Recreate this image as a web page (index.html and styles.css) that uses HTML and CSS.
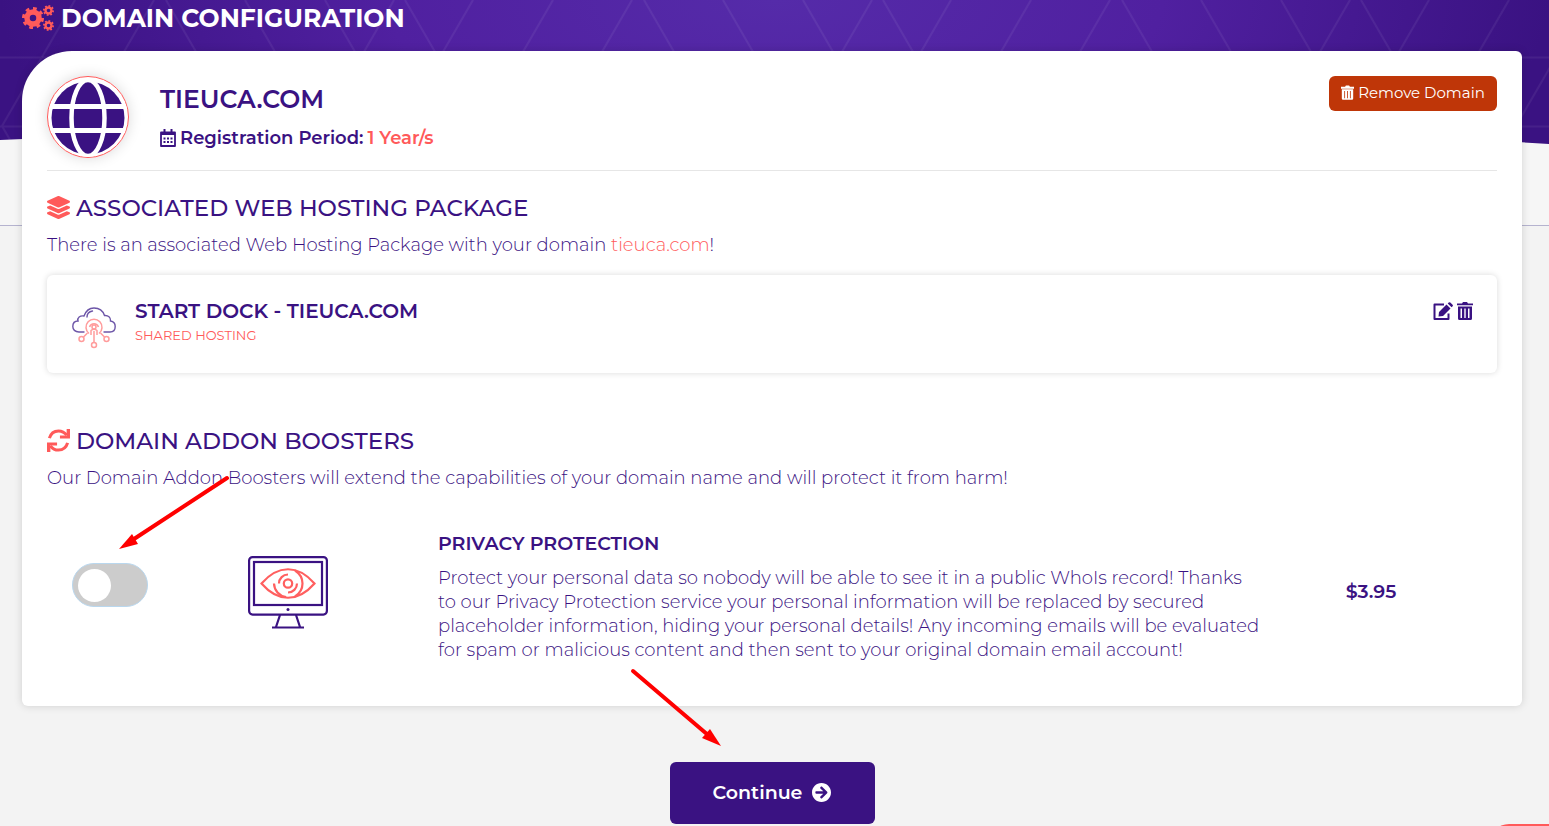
FILE: index.html
```
<!DOCTYPE html>
<html lang="en">
<head>
    <meta charset="UTF-8">
    <meta name="viewport" content="width=device-width, initial-scale=1.0">
    <title>Domain Configuration</title>
    <link rel="stylesheet" href="styles.css">
</head>

<body>
    <div class="hero-bg">
        <svg width="100%" height="100%" aria-hidden="true">
            <defs>
                <pattern id="triangles" width="478" height="195" patternUnits="userSpaceOnUse">
                    <path d="M-5 0l-33 57M75 0l-33 57M154 0l-33 57M394 0l-33 57M473 0l-33 57" />
                    <path d="M166 0l33 57M245 0l33 57M325 0l33 57M405 0l33 57" />
                    <path d="M0 57.500H478M0 126.500H478M42 57L2 126l40 69M122 57L82 126" />
                </pattern>
            </defs>
            <rect width="100%" height="100%" fill="url(#triangles)" />
        </svg>
    </div>
    <div class="top-band"></div>

    <main>
        <h1 class="page-title">
            <svg class="icon-cogs" viewBox="0 0 32 26" aria-hidden="true">
                <circle class="ring" cx="11" cy="13" r="6" stroke-width="5.500" />
                <circle class="ring" cx="11" cy="13" r="9" stroke-width="4" pathLength="16" stroke-dasharray="1" />
                <circle class="ring" cx="26.500" cy="5.500" r="3" stroke-width="2.400" />
                <circle class="ring" cx="26.500" cy="5.500" r="4.600" stroke-width="1.800" pathLength="16" stroke-dasharray="1" />
                <circle class="ring" cx="26.500" cy="20.500" r="3" stroke-width="2.400" />
                <circle class="ring" cx="26.500" cy="20.500" r="4.600" stroke-width="1.800" pathLength="16" stroke-dasharray="1" />
            </svg>
            DOMAIN CONFIGURATION
        </h1>

        <div class="card">
            <div class="domain-header">
                <div class="domain-icon">
                    <svg viewBox="0 0 80 80" aria-hidden="true">
                        <circle cx="40" cy="41" r="36.500" fill="#3a1282" />
                        <path d="M0 29.500H80M0 53.500H80" fill="none" stroke="#fff" stroke-width="5" />
                        <ellipse cx="40" cy="41" rx="16.500" ry="38" fill="none" stroke="#fff" stroke-width="4.500" />
                    </svg>
                </div>
                <div class="domain-info">
                    <h2>TIEUCA.COM</h2>
                    <p>
                        <svg class="icon-calendar" viewBox="0 0 16 18" aria-hidden="true">
                            <path d="M1 3.500H15V17H1Z" fill="none" stroke="currentColor" stroke-width="1.800" stroke-linejoin="round" />
                            <path d="M1 3H15V6H1ZM3.500 0H5.500V4H3.500ZM10.500 0H12.500V4H10.500Z" fill="currentColor" />
                            <path d="M3.500 9.500H12.500M3.500 13H12.500" stroke="currentColor" stroke-width="2" stroke-dasharray="2 1.500" />
                        </svg>
                        Registration Period: <span class="accent">1 Year/s</span>
                    </p>
                </div>
                <button type="button" class="btn-remove">
                    <svg class="icon-trash-small" viewBox="0 0 16 18" aria-hidden="true">
                        <path fill="currentColor" fill-rule="evenodd" d="M0 2H5L6 .5H10L11 2H16V4.500H0ZM1 5H15V16.500Q15 18 13.500 18H2.500Q1 18 1 16.500ZM4 7V16H5V7ZM7.500 7V16H8.500V7ZM11 7V16H12V7Z" />
                    </svg>
                    Remove Domain
                </button>
            </div>

            <section class="package">
                <h3>
                    <svg class="icon-heading" viewBox="0 0 512 512" aria-hidden="true">
                        <path d="M12.410 148.020l232.940 105.670c6.800 3.090 14.490 3.090 21.290 0l232.940-105.670c16.550-7.510 16.550-32.520 0-40.030L266.650 2.310a25.607 25.607 0 0 0-21.290 0L12.410 107.980c-16.550 7.510-16.550 32.530 0 40.040zm487.180 88.280l-58.090-26.330-161.640 73.270c-7.560 3.430-15.590 5.170-23.860 5.170s-16.290-1.740-23.860-5.170L70.510 209.970l-58.100 26.330c-16.550 7.500-16.550 32.500 0 40l232.940 105.590c6.800 3.080 14.490 3.080 21.290 0L499.590 276.300c16.550-7.500 16.550-32.500 0-40zm0 127.800l-57.870-26.230-161.860 73.370c-7.560 3.430-15.590 5.170-23.860 5.170s-16.290-1.740-23.860-5.170L70.290 337.870 12.410 364.100c-16.550 7.500-16.550 32.500 0 40l232.940 105.590c6.800 3.080 14.490 3.080 21.290 0L499.590 404.100c16.550-7.500 16.550-32.500 0-40z" />
                    </svg>
                    ASSOCIATED WEB HOSTING PACKAGE
                </h3>
                <p class="lead">There is an associated Web Hosting Package with your domain <span class="accent">tieuca.com</span>!</p>

                <div class="package-box">
                    <svg class="package-icon" viewBox="0 0 44 42" fill="none" aria-hidden="true">
                        <g stroke="#6d56a8" stroke-width="1.400" stroke-linecap="round">
                            <path d="M12 25H7C3 25 .8 22.500 .8 19.500C.8 16 3 14 6 14C5 10.500 8 8.500 12 9C14 3.500 18 1 22 1C27 1 31 4 32.500 8.500C36 8 39 10.500 38.500 14C41.500 14.500 43.200 17 43.200 19.500C43.200 23 41 25 38 25H32" />
                            <path d="M15 10C15 6.500 17.500 4.500 20.500 4" />
                        </g>
                        <g stroke="#ff9c9c" stroke-width="1.500">
                            <path d="M17 26.500A8 8 0 1 1 27 26.500" />
                            <path d="M17.500 20A4.800 4.800 0 0 1 26.500 20" />
                            <circle cx="22" cy="20" r="2" />
                            <path d="M19 28V23.500Q22 21 25 23.500V28M22 24V35M15.500 26L11.500 30M28.500 26L32.500 30" />
                            <circle cx="9.500" cy="32" r="2.500" />
                            <circle cx="34.500" cy="32" r="2.500" />
                            <circle cx="22" cy="38" r="2.500" />
                        </g>
                    </svg>
                    <div class="package-info">
                        <h4>START DOCK - TIEUCA.COM</h4>
                        <p>SHARED HOSTING</p>
                    </div>
                    <div class="package-actions">
                        <button type="button" aria-label="Edit package">
                            <svg class="icon-edit" viewBox="0 0 20 18" aria-hidden="true">
                                <path d="M11 2.500H1.500V17H15.500V11.500" fill="none" stroke="currentColor" stroke-width="2" stroke-linejoin="round" />
                                <path fill="currentColor" d="M5.500 14.500L6 10L13.500 2.500L17.500 6.500L10 14ZM14.700 1.500L15.700 .5Q16.500 -.2 17.300 .5L19.600 2.700Q20.300 3.500 19.600 4.300L18.600 5.300Z" />
                            </svg>
                        </button>
                        <button type="button" aria-label="Delete package">
                            <svg class="icon-trash" viewBox="0 0 16 18" aria-hidden="true">
                                <path fill="currentColor" fill-rule="evenodd" d="M0 1.500H5L6 0H10L11 1.500H16V3.300H0ZM1 4.500H15V16.500Q15 18 13.500 18H2.500Q1 18 1 16.500ZM3.500 6.500V16H5V6.500ZM7.300 6.500V16H8.700V6.500ZM11 6.500V16H12.500V6.500Z" />
                            </svg>
                        </button>
                    </div>
                </div>
            </section>

            <section class="addons">
                <h3>
                    <svg class="icon-heading" viewBox="0 0 24 24" aria-hidden="true">
                        <path d="M2.500 9.500C4 4.500 8 2 12 2C15.500 2 18.500 3.700 20.500 6.500M21.500 14.500C20 19.500 16 22 12 22C8.500 22 5.500 20.300 3.500 17.500" fill="none" stroke="currentColor" stroke-width="3.200" />
                        <path d="M24 0V10H13.500V6.800H20.500V0ZM0 24V14H10.500V17.200H3.500V24Z" />
                    </svg>
                    DOMAIN ADDON BOOSTERS
                </h3>
                <p class="lead">Our Domain Addon Boosters will extend the capabilities of your domain name and will protect it from harm!</p>

                <div class="addon-row">
                    <div class="addon-toggle">
                        <input type="checkbox" class="switch" id="privacy">
                    </div>
                    <svg class="addon-icon" viewBox="0 0 80 74" fill="none" aria-hidden="true">
                        <g stroke="#3a1282" stroke-width="2.200">
                            <rect x="1.100" y="1.100" width="77.800" height="57.500" rx="3.500" />
                            <rect x="6" y="6" width="68" height="43" />
                            <path d="M32 59L28 71M48 59L52 71M24 71.500H56" />
                        </g>
                        <circle cx="40" cy="53.500" r="1.500" fill="#3a1282" />
                        <g stroke="#ff5f5f" stroke-width="2.200">
                            <path d="M13.500 27.500C30 8.500 50 8.500 66.500 27.500C50 46.500 30 46.500 13.500 27.500Z" />
                            <path d="M47 14.500C57 21 57 34 47 40.500" />
                            <circle cx="40" cy="27.500" r="4.200" />
                            <path d="M31 27.500A9 9 0 0 1 40 18.500M26 27.500A14 14 0 0 0 38 41M49 27.500A9 9 0 0 1 40 36.500" />
                        </g>
                    </svg>
                    <div class="addon-text">
                        <h4><label for="privacy">PRIVACY PROTECTION</label></h4>
                        <p>
                            Protect your personal data so nobody will be able to see it in a public WhoIs record! Thanks<br>
                            to our Privacy Protection service your personal information will be replaced by secured<br>
                            placeholder information, hiding your personal details! Any incoming emails will be evaluated<br>
                            for spam or malicious content and then sent to your original domain email account!
                        </p>
                    </div>
                    <div class="addon-price">$3.95</div>
                </div>

                <svg class="arrow arrow-toggle" viewBox="0 0 112 76" aria-hidden="true">
                    <path d="M109 3L16 64" stroke="#f00" stroke-width="4" stroke-linecap="round" />
                    <path d="M1 74L14 59L20 69Z" fill="#f00" />
                </svg>
            </section>
        </div>

        <div class="continue-row">
            <svg class="arrow arrow-continue" viewBox="0 0 92 80" aria-hidden="true">
                <path d="M3 3L78 67" stroke="#f00" stroke-width="4" stroke-linecap="round" />
                <path d="M91 78L72 70L80 61Z" fill="#f00" />
            </svg>
            <button type="button" class="btn-continue">
                Continue
                <svg viewBox="8 8 496 496" aria-hidden="true">
                    <path fill="currentColor" d="M256 8c137 0 248 111 248 248S393 504 256 504 8 393 8 256 119 8 256 8zm-28.900 143.600l75.500 72.400H120c-13.300 0-24 10.700-24 24v16c0 13.300 10.700 24 24 24h182.600l-75.500 72.400c-9.700 9.300-9.900 24.800-.4 34.300l11 10.900c9.400 9.400 24.600 9.400 33.900 0L404.300 273c9.400-9.400 9.400-24.600 0-33.900L271.600 106.300c-9.400-9.400-24.600-9.400-33.900 0l-11 10.900c-9.500 9.600-9.300 25.100.4 34.400z" />
                </svg>
            </button>
        </div>
    </main>

    <button type="button" class="chat-tab" aria-label="Chat"></button>
</body>
</html>
```

FILE: styles.css
```
* {
    box-sizing: border-box;
}

body {
    margin: 0;
    font-family: 'Montserrat', 'Inter', sans-serif;
    font-size: 18px;
    color: #3a1282;
    background-color: #f3f3f3;
    position: relative;
}

h1, h2, h3, h4, p {
    margin: 0;
}

button {
    font-family: inherit;
    border: 0;
    cursor: pointer;
}

svg {
    display: block;
    flex-shrink: 0;
}

.accent {
    color: #ff5a5a;
}

/* purple header behind the card */
.hero-bg {
    position: absolute;
    top: 0;
    left: 0;
    width: 100%;
    height: 144px;
    background: radial-gradient(ellipse 50% 300px at 50% 0, #552ba9 0%, #5020a0 50%, #3a1282 100%);
    clip-path: polygon(0 0, 100% 0, 100% 100%, 97% 141px, 50% 130px, 3% 138px, 0 140px);
}

.hero-bg path {
    fill: none;
    stroke: rgba(255, 255, 255, 0.06);
    stroke-width: 2;
}

.top-band {
    position: absolute;
    top: 0;
    left: 0;
    z-index: -1;
    width: 100%;
    height: 226px;
    background-color: #f6f6f6;
    border-bottom: 1px solid #b5b3cf;
}

main {
    position: relative;
    padding: 0 27px 2px 22px;
}

.page-title {
    display: flex;
    align-items: center;
    gap: 7px;
    height: 51px;
    padding-bottom: 15px;
    color: #fff;
    font-size: 25px;
    font-weight: 700;
}

.icon-cogs {
    width: 32px;
    height: 26px;
}

.icon-cogs .ring {
    fill: none;
    stroke: #ff5a5a;
}

.card {
    padding: 25px;
    background-color: #fff;
    border-radius: 50px 6px 6px 6px;
    box-shadow: 0 0 8px rgba(0, 0, 0, 0.15);
}

.domain-header {
    display: flex;
    align-items: flex-start;
    height: 95px;
    border-bottom: 1px solid #e6e6e6;
}

.domain-icon {
    width: 82px;
    height: 82px;
    border: 1px solid #ff5a5a;
    border-radius: 50%;
    overflow: hidden;
    box-shadow: 0 0 14px rgba(0, 0, 0, 0.15);
}

.domain-info {
    flex: 1;
    padding: 8px 0 0 31px;
}

.domain-info h2 {
    font-size: 25px;
    font-weight: 600;
    line-height: 30px;
}

.domain-info p {
    display: flex;
    align-items: center;
    gap: 4px;
    margin-top: 12px;
    font-weight: 600;
    line-height: 24px;
}

.icon-calendar {
    width: 16px;
    height: 18px;
}

.btn-remove {
    display: flex;
    align-items: center;
    justify-content: center;
    gap: 4px;
    width: 168px;
    height: 35px;
    padding: 0 0 2px;
    border-radius: 6px;
    background-color: #bf3608;
    color: #fff;
    font-size: 15px;
}

.icon-trash-small {
    width: 13px;
    height: 15px;
}

h3 {
    display: flex;
    align-items: center;
    gap: 6px;
    font-size: 23px;
    font-weight: 500;
    line-height: 28px;
}

.icon-heading {
    width: 23px;
    height: 23px;
    margin-bottom: 2px;
    fill: #ff5a5a;
    color: #ff5a5a;
}

.lead {
    margin-top: 11px;
    line-height: 24px;
    font-weight: 300;
}

.package {
    padding-top: 23px;
}

.package-box {
    display: flex;
    align-items: flex-start;
    height: 98px;
    margin-top: 18px;
    padding: 24px;
    border-radius: 6px;
    box-shadow: 0 0 6px rgba(0, 0, 0, 0.15);
}

.package-icon {
    width: 46px;
    height: 42px;
    margin-top: 8px;
}

.package-info {
    flex: 1;
    padding-left: 18px;
}

.package-info h4 {
    font-size: 20px;
    font-weight: 600;
    line-height: 24px;
}

.package-info p {
    margin-top: 4px;
    font-size: 13px;
    line-height: 16px;
    color: #ff5a5a;
}

.package-actions {
    display: flex;
    gap: 4px;
    padding-top: 3px;
}

.package-actions button {
    padding: 0;
    background: none;
    color: #3a1282;
}

.icon-edit {
    width: 20px;
    height: 18px;
}

.icon-trash {
    width: 16px;
    height: 18px;
}

.addons {
    position: relative;
    padding: 54px 0 19px;
}

.addon-row {
    display: grid;
    grid-template-columns: minmax(0, 125fr) minmax(0, 232fr) minmax(0, 841fr) minmax(0, 252fr);
    align-items: start;
    margin-top: 42px;
}

.addon-toggle {
    display: flex;
    justify-content: center;
    padding-top: 31px;
}

.switch {
    appearance: none;
    display: flex;
    align-items: center;
    width: 76px;
    height: 44px;
    margin: 0;
    padding: 0 5px;
    border: 1px solid #b9d7ee;
    border-radius: 22px;
    background-color: #ccc;
    cursor: pointer;
}

.switch::before {
    content: "";
    width: 33px;
    height: 33px;
    border-radius: 50%;
    background-color: #fff;
}

.switch:checked {
    justify-content: flex-end;
    background-color: #3a1282;
}

.addon-icon {
    width: 80px;
    height: 74px;
    margin-top: 24px;
    justify-self: center;
}

.addon-text {
    padding-left: 34px;
    white-space: nowrap;
}

.addon-text h4 {
    font-size: 19px;
    font-weight: 600;
    line-height: 24px;
}

.addon-text p {
    margin-top: 10px;
    font-weight: 300;
    line-height: 24px;
}

.addon-price {
    padding-top: 48px;
    text-align: center;
    font-size: 19px;
    font-weight: 600;
    line-height: 24px;
}

/* pointer arrows */
.arrow {
    position: absolute;
    z-index: 1;
}

.arrow-toggle {
    top: 102px;
    left: 71px;
    width: 112px;
    height: 76px;
}

.arrow-continue {
    top: -38px;
    left: calc(50% - 142px);
    width: 92px;
    height: 80px;
}

.continue-row {
    position: relative;
    display: flex;
    justify-content: center;
    padding-top: 56px;
}

.btn-continue {
    display: flex;
    align-items: center;
    justify-content: center;
    gap: 10px;
    width: 205px;
    height: 62px;
    padding: 0 0 2px;
    border-radius: 6px;
    background-color: #3a1282;
    color: #fff;
    font-size: 19px;
    font-weight: 600;
}

.btn-continue svg {
    width: 19px;
    height: 19px;
}

.chat-tab {
    position: fixed;
    right: -20px;
    bottom: -38px;
    width: 80px;
    height: 40px;
    border-radius: 20px;
    background-color: #ff5a5a;
}
```
